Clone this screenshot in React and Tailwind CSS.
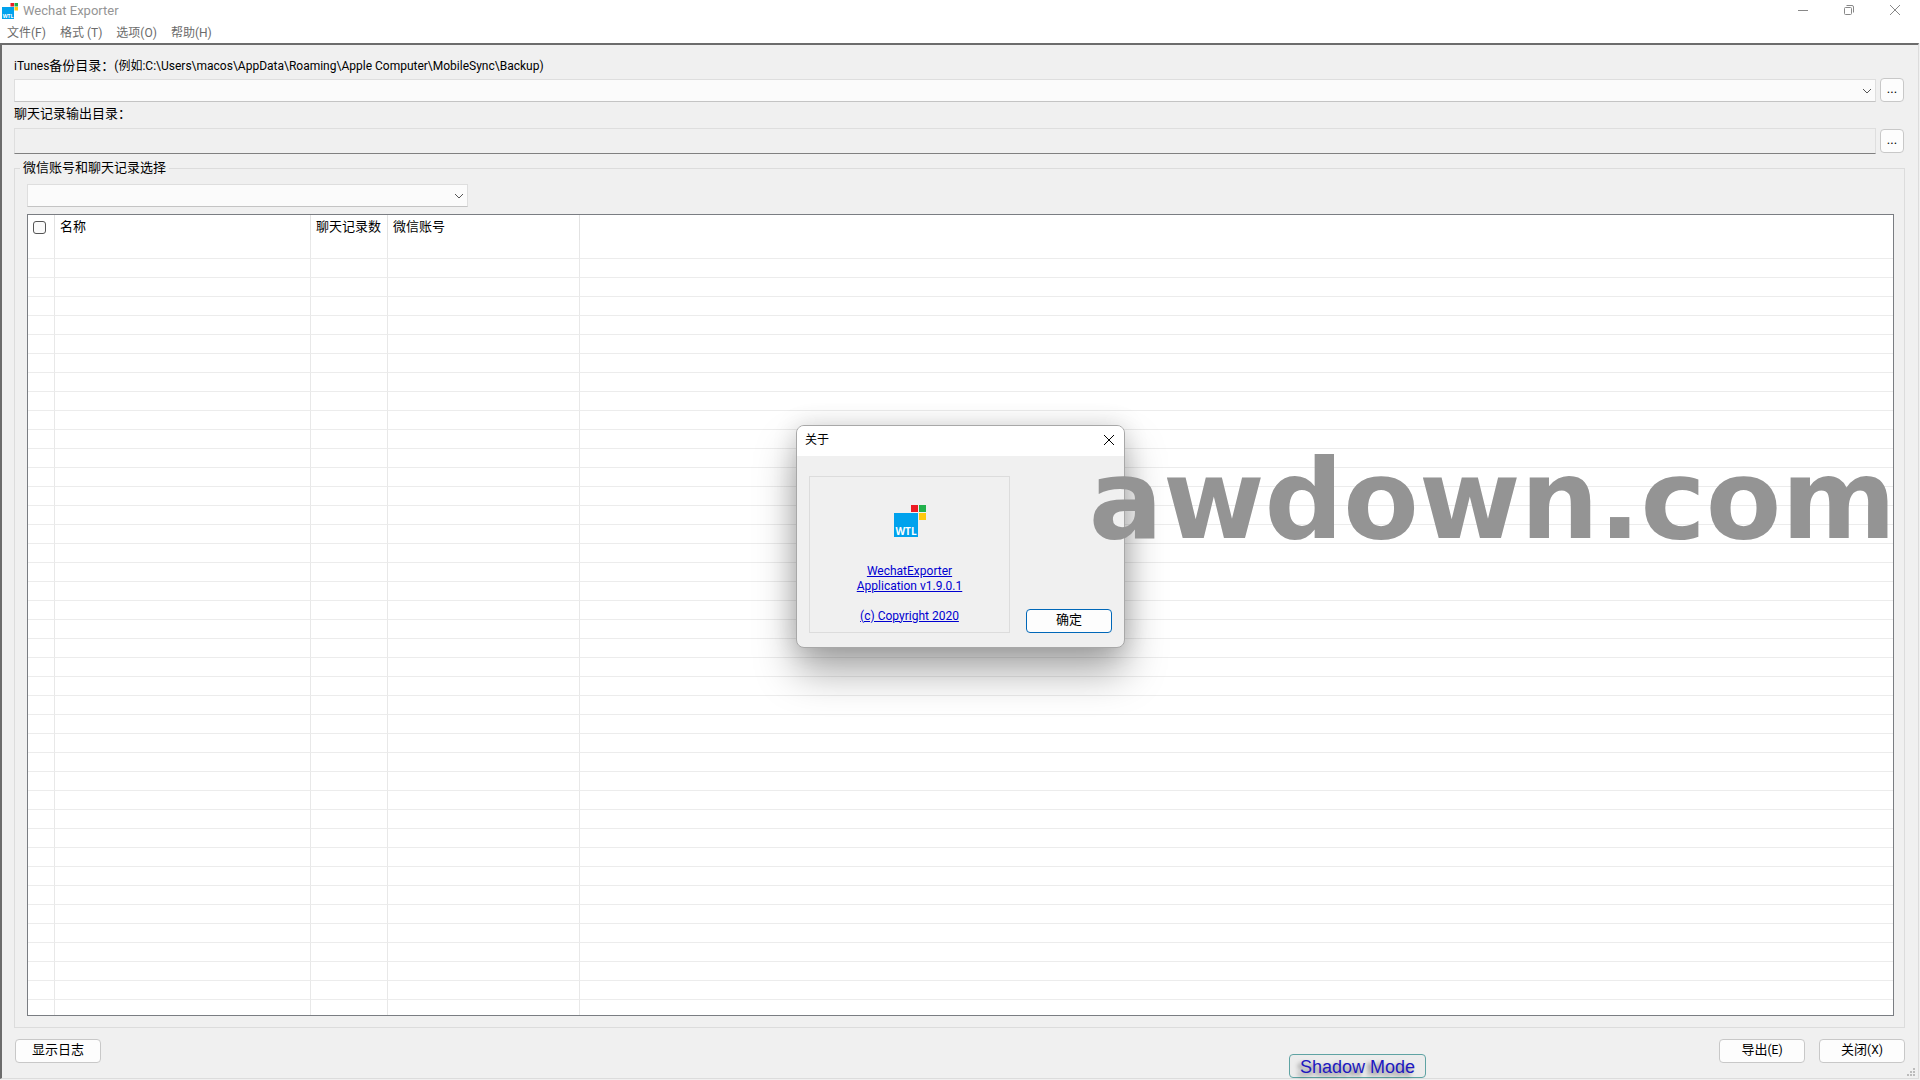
import React from 'react';

const FONT = "font-['Roboto','Noto_Sans_CJK_SC',sans-serif]";

function WtlLogo({ className }) {
  return (
    <svg viewBox="0 0 32 32" className={className} aria-hidden="true">
      <rect x="0" y="8" width="24" height="24" fill="#00a2ed" />
      <rect x="17" y="0" width="7" height="7" fill="#ed1c24" />
      <rect x="25" y="0" width="7" height="7" fill="#22b14c" />
      <rect x="25" y="8" width="7" height="7" fill="#ffc90e" />
      <text
        x="12"
        y="30"
        textAnchor="middle"
        fontFamily="Open Sans, Noto Sans, sans-serif"
        fontWeight="700"
        fontSize="10"
        fill="#ffffff"
      >
        WTL
      </text>
    </svg>
  );
}

function Cross({ className }) {
  return (
    <svg viewBox="0 0 12 12" className={className} fill="none" stroke="currentColor" aria-hidden="true">
      <path d="M1 1L11 11M11 1L1 11" />
    </svg>
  );
}

function Combo({ label, className }) {
  return (
    <div className={`relative h-[23px] ${className}`}>
      <select
        aria-label={label}
        className="block h-full w-full appearance-none border border-[#dedede] border-b-[#c4c4c4] bg-[#fbfbfb] px-2 outline-none"
      />
      <svg
        viewBox="0 0 10 6"
        className="pointer-events-none absolute top-[9px] right-1 h-[6px] w-[10px]"
        fill="none"
        stroke="#555555"
        aria-hidden="true"
      >
        <path d="M1 1L5 5L9 1" />
      </svg>
    </div>
  );
}

function PushButton({ children, className }) {
  return (
    <button
      type="button"
      className={`flex h-6 items-center justify-center rounded border bg-[#fdfdfd] pb-0.5 text-black ${className}`}
    >
      {children}
    </button>
  );
}

const MENUS = ['文件(F)', '格式 (T)', '选项(O)', '帮助(H)'];
const ROWS = Array.from({ length: 40 }, (_, i) => i);

function Header() {
  return (
    <header className="bg-white text-[#6b6b6b]">
      <div className="flex h-[22px] items-center justify-between">
        <div className="flex items-center gap-[5px] pl-[2px]">
          <WtlLogo className="h-4 w-4" />
          <h1 className="text-[13px] leading-4 text-[#959595]">Wechat Exporter</h1>
        </div>
        <div className="flex items-center gap-[34px] pr-[19px] pb-0.5 text-[#888888]">
          <button type="button" aria-label="Minimize">
            <svg viewBox="0 0 12 12" className="h-3 w-3" fill="none" stroke="currentColor" aria-hidden="true">
              <path d="M1 6.500H11" />
            </svg>
          </button>
          <button type="button" aria-label="Restore">
            <svg viewBox="0 0 12 12" className="h-3 w-3" fill="none" stroke="currentColor" aria-hidden="true">
              <rect x="1.500" y="3.500" width="7" height="7" rx="1" />
              <path d="M3.500 1.500H9Q10.500 1.500 10.500 3V8.500" />
            </svg>
          </button>
          <button type="button" aria-label="Close">
            <Cross className="h-3 w-3" />
          </button>
        </div>
      </div>
      <nav className="flex h-[21px] items-start gap-[14px] pl-[7px] text-[12px] leading-[22px]">
        {MENUS.map((m) => (
          <button key={m} type="button" className="block">
            {m}
          </button>
        ))}
      </nav>
    </header>
  );
}

function ChatTable() {
  const head = 'border-r border-[#e2e2e2] p-0 pb-0.5 text-left font-normal whitespace-nowrap';
  const cell = 'border-r border-b border-r-[#e8e8e8] border-b-[#ececec] p-0';
  const tail = 'border-r border-[#e8e8e8] p-0';
  return (
    <div className="min-h-0 flex-1 overflow-hidden border border-[#7a7d82] bg-white">
      <table className="w-full table-fixed border-separate border-spacing-0">
        <colgroup>
          <col className="w-[27px]" />
          <col className="w-64" />
          <col className="w-[77px]" />
          <col className="w-48" />
          <col />
        </colgroup>
        <thead>
          <tr className="h-[25px]">
            <th className="border-r border-[#e2e2e2] p-0">
              <input
                type="checkbox"
                aria-label="全选"
                className="ml-[5px] block h-[13px] w-[13px] appearance-none rounded-[3px] border border-[#555555] bg-[#fafafa]"
              />
            </th>
            <th className={head}>
              <span className="pl-[5px]">名称</span>
            </th>
            <th className={head}>
              <span className="pl-[5px]">聊天记录数</span>
            </th>
            <th className={head}>
              <span className="pl-[5px]">微信账号</span>
            </th>
            <th className="p-0" />
          </tr>
        </thead>
        <tbody>
          {ROWS.map((r) => (
            <tr key={r} className="h-[19px]">
              <td className={cell} />
              <td className={cell} />
              <td className={cell} />
              <td className={cell} />
              <td className="border-b border-[#ececec] p-0" />
            </tr>
          ))}
          <tr className="h-4">
            <td className={tail} />
            <td className={tail} />
            <td className={tail} />
            <td className={tail} />
            <td className="p-0" />
          </tr>
        </tbody>
      </table>
    </div>
  );
}

function AboutDialog() {
  return (
    <div
      role="dialog"
      aria-label="关于"
      className="w-[329px] overflow-hidden rounded-lg border border-[#a8a8a8] bg-[#f0f0f0] shadow-[0_24px_40px_rgba(0,0,0,0.34),0_0_24px_rgba(0,0,0,0.14)]"
    >
      <div className="flex h-[30px] items-center justify-between bg-white pr-[9px] pb-px pl-2">
        <h2 className="text-[12px] leading-4 text-black">关于</h2>
        <button type="button" aria-label="关闭" className="text-black">
          <Cross className="h-3 w-3" />
        </button>
      </div>
      <div className="flex items-end justify-between pt-5 pr-3 pb-[14px] pl-3">
        <div className="flex h-[157px] w-[201px] flex-col items-center border border-[#dcdcdc] pt-7">
          <WtlLogo className="h-8 w-8" />
          <a href="#about" className="mt-[27px] text-center text-[12px] leading-[15px] text-[#0000d0] underline">
            WechatExporter
            <br />
            Application v1.9.0.1
            <br />
            <br />
            (c) Copyright 2020
          </a>
        </div>
        <PushButton className="w-[86px] border-[#0067b8]">确定</PushButton>
      </div>
    </div>
  );
}

export default function App() {
  return (
    <div className={`relative flex h-screen flex-col overflow-hidden bg-[#f0f0f0] text-[13px] leading-4 text-black ${FONT}`}>
      <Header />
      <main className="mr-px mb-px flex min-h-0 flex-1 flex-col border-t-2 border-r border-b border-l-2 border-t-[#6c6c6c] border-r-[#dcdcdc] border-b-[#dcdcdc] border-l-[#6c6c6c] pr-[14px] pl-3">
        <p className="mt-[13px] text-[12px] leading-4">
          iTunes<span className="text-[13px]">备份目录：</span>
          (例如:C:\Users\macos\AppData\Roaming\Apple Computer\MobileSync\Backup)
        </p>
        <div className="mt-1 flex h-6 items-center gap-1">
          <Combo label="iTunes备份目录" className="flex-1" />
          <PushButton className="w-6 border-[#c8c8c8]">...</PushButton>
        </div>
        <label htmlFor="output" className="mt-1 block">
          聊天记录输出目录：
        </label>
        <div className="mt-[6px] flex items-center gap-1">
          <input
            id="output"
            type="text"
            readOnly
            className="block h-[26px] min-w-0 flex-1 border border-[#dedede] border-b-[#808080] bg-[#f0f0f0] px-2 outline-none"
          />
          <PushButton className="w-6 border-[#c8c8c8]">...</PushButton>
        </div>

        <section className="mt-[14px] -mr-px flex min-h-0 flex-1 flex-col border border-[#dcdcdc] pr-[10px] pb-[11px] pl-3">
          <h2 className="-mt-[9px] -ml-[7px] self-start bg-[#f0f0f0] px-[3px]">微信账号和聊天记录选择</h2>
          <Combo label="微信账号" className="mt-2 mb-[7px] w-[441px]" />
          <ChatTable />
        </section>

        <footer className="mt-[11px] -mr-px mb-[15px] flex items-center justify-between">
          <PushButton className="ml-px w-[86px] border-[#c8c8c8]">显示日志</PushButton>
          <div className="flex gap-[14px]">
            <PushButton className="w-[86px] border-[#c8c8c8]">
              导出<span className="text-[12px]">(E)</span>
            </PushButton>
            <PushButton className="w-[86px] border-[#c8c8c8]">
              关闭<span className="text-[12px]">(X)</span>
            </PushButton>
          </div>
        </footer>
      </main>

      <svg viewBox="0 0 9 9" className="absolute right-1 bottom-[3px] h-[9px] w-[9px]" fill="#bcbcbc" aria-hidden="true">
        <path d="M6 0H8V2H6ZM3 3H5V5H3ZM6 3H8V5H6ZM0 6H2V8H0ZM3 6H5V8H3ZM6 6H8V8H6Z" />
      </svg>

      <button
        type="button"
        className="absolute right-[494px] bottom-[2px] flex h-6 w-[137px] items-center justify-center rounded border border-[#5fa3a3] bg-[#ececec] pt-px font-['Liberation_Sans',sans-serif] text-[18px] leading-5 text-[#2018c0] [text-shadow:-3px_3px_4px_rgba(0,0,0,0.5)]"
      >
        Shadow Mode
      </button>

      <div className="absolute inset-0 flex items-center justify-center pb-2 pl-px">
        <AboutDialog />
      </div>

      <div className="pointer-events-none absolute top-[444px] right-6 font-['DejaVu_Sans',sans-serif] text-[110px] leading-[112px] font-bold text-[#949494]">
        awdown.com
      </div>
    </div>
  );
}
